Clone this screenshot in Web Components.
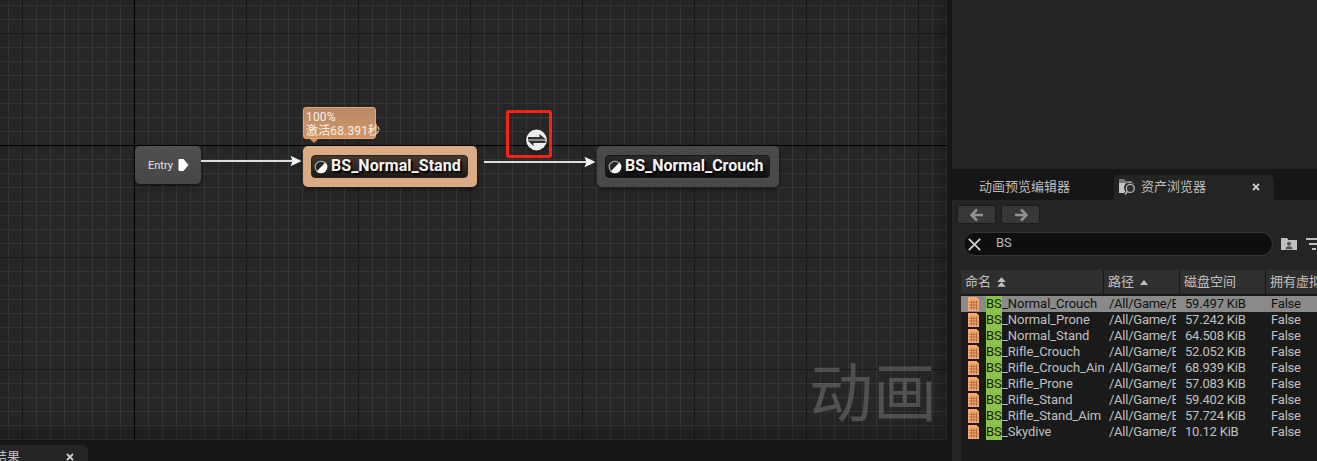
<!DOCTYPE html>
<html lang="zh">
<head>
<meta charset="utf-8">
<title>Animation graph</title>
<style>
html,body{margin:0;height:100%;overflow:hidden;background:#161616}
body{font-family:Roboto,"Noto Sans CJK SC",sans-serif;font-size:13px;color:#c0c0c0}
</style>
</head>
<body>
<anim-editor></anim-editor>
<script>
function define(name, html, setup) {
  customElements.define(name, class extends HTMLElement {
    connectedCallback() {
      if (this.shadowRoot) return;
      const root = this.attachShadow({mode: 'open'});
      const t = document.createElement('template');
      t.innerHTML = html;
      root.append(t.content.cloneNode(true));
      if (setup) setup(this, root);
    }
  });
}

define('state-node', `
<style>
:host{display:flex;box-sizing:border-box;padding:9px 9px 9px 8px;border-radius:5px;background:rgba(82,82,82,.82);box-shadow:0 2px 5px rgba(0,0,0,.5)}
:host([active]){background:#d9ac86}
.in{flex:1;display:flex;align-items:center;gap:3px;padding-left:2px;border-radius:4px;border:1px solid #181818;box-sizing:border-box;
background:linear-gradient(#2a2a2a,#101010);color:#f4f4f4;font-weight:700;font-size:16px;white-space:nowrap;text-shadow:2px 2px 1px #000}
:host([active]) .in{background:linear-gradient(#42382e,#1e1a16);border-color:#2c241c}
:host([active]) span{letter-spacing:.06px}
svg{flex:none}
span{display:block;line-height:20px;margin-top:-2px}
</style>
<div class="in"><svg width="14" height="14" viewBox="0 0 14 14"><circle cx="7" cy="7" r="5.8" fill="#252525" stroke="#b5b5b5" stroke-width="1.1"/><path d="M11.4 2.6A6.2 6.2 0 0 1 2.6 11.4Z" fill="#fff"/></svg><span><slot></slot></span></div>`);

define('entry-node', `
<style>
:host{display:flex;box-sizing:border-box;align-items:center;padding:0 12px 0 13px;justify-content:space-between;border-radius:5px;background:linear-gradient(#505050,#464646);box-shadow:0 2px 5px rgba(0,0,0,.55);color:#e4e4e4;font-size:11px}
</style>
<slot></slot><svg width="11" height="12" viewBox="0 0 11 12"><path d="M1.5 0H5.5L10.5 6 5.5 12H1.5Q.5 12 .5 11V1Q.5 0 1.5 0Z" fill="#fff"/></svg>`);

define('state-bubble', `
<style>
:host{display:block;box-sizing:border-box;border:1px solid #eda474;border-radius:3px;background:linear-gradient(#b98a68,#d29667);color:#f7efe9;font-size:12px;line-height:14px;padding:2px 0 0 2px;white-space:nowrap}
i{position:absolute;left:6px;top:31px;border:4px solid transparent;border-top-color:#d09060;border-bottom:0}
div{letter-spacing:.15px}
</style><div><slot name="pct"></slot></div><div><slot></slot></div><i></i>`);

define('graph-link', `
<style>:host{display:block;height:12px}svg{display:block;width:100%;height:12px;overflow:visible}</style>
<svg><line x1="0" y1="6" y2="6" stroke="#dedede" stroke-width="1.9"/><path fill="#f2f2f2"/></svg>`,
(h, r) => {
  const w = +h.getAttribute('length');
  r.querySelector('line').setAttribute('x2', w - 5);
  r.querySelector('path').setAttribute('d', `M${w-10.5} .7 L${w+.7} 6 L${w-10.5} 11.3 L${w-8.5} 6Z`);
});

define('transition-rule', `
<style>:host{display:block}svg{display:block;filter:drop-shadow(0 2px 2px rgba(0,0,0,.5))}</style>
<svg width="23" height="22" viewBox="0 0 23 22"><circle cx="11.5" cy="11" r="10.4" fill="#eee"/><path d="M3 11H20.5" stroke="#888" stroke-width="1.4"/><path d="M3 10.3V8H14.5V5L20.7 10.3Z" fill="#303030"/><path d="M20.5 11.7V14H8.5V17L2.9 11.7Z" fill="#303030"/></svg>`);

define('graph-canvas', `
<style>
:host{display:block;position:relative;overflow:hidden;background:#262626}
.grid,.shade{position:absolute;inset:0;display:block}
.shade{box-shadow:inset -6px -8px 22px rgba(0,0,0,.28)}
.mark{position:absolute;left:809px;top:345px;font:400 64px/86px "Noto Sans CJK SC",sans-serif;color:rgba(150,150,150,.38);white-space:nowrap}
.n{position:absolute}
.box{position:absolute;left:506px;top:110px;width:40px;height:42px;border:3px solid #fa2115;border-radius:3px}
</style>
<svg class="grid" width="947" height="440"></svg><div class="shade"></div>
<div class="mark">动画</div>
<entry-node class="n" style="left:135px;top:146px;width:66px;height:38px">Entry</entry-node>
<graph-link class="n" length="100" style="left:201px;top:155px;width:100px"></graph-link>
<state-bubble class="n" style="left:303px;top:107px;width:73px;height:32px"><span slot="pct">100%</span>激活68.391秒</state-bubble>
<state-node active class="n" style="left:303px;top:146px;width:174px;height:41px">BS_Normal_Stand</state-node>
<graph-link class="n" length="111" style="left:484px;top:156px;width:111px"></graph-link>
<div class="box"></div>
<transition-rule class="n" style="left:525px;top:129px"></transition-rule>
<state-node class="n" style="left:597px;top:146px;width:182px;height:41px">BS_Normal_Crouch</state-node>`,
(h, r) => {
  let minor = '', major = '';
  for (let x = 8; x < 947; x += 14) (x - 134) % 112 ? minor += `M${x} 0h1v440h-1z` : major += `M${x} 0h1v440h-1z`;
  for (let y = 5; y < 440; y += 14) (y - 145) % 112 ? minor += `M0 ${y}h947v1H0z` : major += `M0 ${y}h947v1H0z`;
  r.querySelector('.grid').innerHTML = `<path d="${minor}" fill="#353535"/><path d="${major}" fill="#181818"/><path d="M134 0h1v440h-1zM0 145h947v1H0z" fill="#000"/>`;
});

define('dock-tab', `
<style>
:host{display:flex;box-sizing:border-box;align-items:center;height:25px;font-size:13px;line-height:20px;white-space:nowrap;color:#bdbdbd}
:host([active]){background:#242424;border-radius:5px 5px 0 0}
.x{margin-left:auto}
:host(:not([closable])) .x{display:none}
</style><slot name="icon"></slot><slot></slot><svg class="x" width="8" height="8" viewBox="0 0 8 8"><path d="M1 1L7 7M7 1L1 7" stroke="#ccc" stroke-width="1.8"/></svg>`);

define('nav-button', `
<style>:host{display:flex;align-items:center;justify-content:center;box-sizing:border-box;width:39px;height:19px;border-radius:3px;background:#373737;border:1px solid #1b1b1b}
:host([forward]) svg{transform:scaleX(-1)}</style>
<svg width="14" height="14" viewBox="0 0 14 14"><path d="M13 7H2.5M7 1.3L1.6 7 7 12.7" fill="none" stroke="#929292" stroke-width="2.6"/></svg>`);

define('search-box', `
<style>:host{display:flex;flex:none;align-items:center;box-sizing:border-box;width:310px;height:24px;border:1px solid #353535;border-radius:12px;background:#0e0e0e;padding-left:4px;gap:15px;color:#bbb}
span{margin-top:-3px}</style>
<svg width="13" height="13" viewBox="0 0 13 13"><path d="M.8 .8L12.2 12.2M12.2 .8L.8 12.2" stroke="#d0d0d0" stroke-width="1.8"/></svg><span><slot></slot></span>`);

define('asset-row', `
<style>
:host{display:grid;grid-template-columns:143px 76px 86px 80px;height:16px;line-height:16px;white-space:nowrap;color:#c0c0c0;letter-spacing:-.2px}
:host([selected]){background:#8a8a8a;color:#111}
div{overflow:hidden;padding-left:5px;margin-right:5px}
.name{display:flex;padding-left:7px;margin-right:0;letter-spacing:-.05px}
.name svg{flex:none;margin-top:1px;margin-right:7px}
b{font-weight:400;background:#8bc34a;color:#151d08;width:16px;flex:none;letter-spacing:-.1px}
.t{overflow:hidden}
.path{letter-spacing:-.25px;margin-right:4px}
</style>
<div class="name"><svg width="11" height="14" viewBox="0 0 11 14"><path d="M0 0H8.5L11 2.5V14H0Z" fill="#fba873"/><path d="M3.5 3.5V13M6 3.5V13M8.5 3.5V13M1 5.2H10.2M1 8H10.2M1 10.8H10.2" stroke="#a5683f" stroke-width=".8"/></svg><b>BS</b><span class="t"></span></div>
<div class="path">/All/Game/B</div><div class="size"></div><div>False</div>`,
(h, r) => {
  r.querySelector('.t').textContent = h.getAttribute('name');
  r.querySelector('.size').textContent = h.getAttribute('size');
});

define('asset-table', `
<style>
:host{display:flex;flex-direction:column;background:#1a1a1a;overflow:hidden}
.head{display:grid;grid-template-columns:143px 76px 86px 80px;height:24px;line-height:24px;background:#2f2f2f;margin-bottom:2px;white-space:nowrap;color:#c0c0c0}
.head div{box-sizing:border-box;border-right:1px solid #191919;padding-left:4px;display:flex;align-items:center;gap:6px}
</style>
<div class="head"><div>命名<svg width="9" height="10" viewBox="0 0 9 10"><path d="M.2 5L4.5 .3 8.8 5ZM.2 9.8L4.5 5.1 8.8 9.8Z" fill="#c0c0c0"/></svg></div><div>路径<svg width="8" height="5" viewBox="0 0 8 5"><path d="M0 5L4 0 8 5Z" fill="#c0c0c0"/></svg></div><div>磁盘空间</div><div>拥有虚拟</div></div>
<slot></slot>`);

define('asset-browser', `
<style>
:host{display:flex;flex-direction:column;background:#242424;overflow:hidden}
.view{height:169px;flex:none}
.tabs{display:flex;align-items:flex-end;height:31px;flex:none;background:#161616}
.t1{width:162px;padding-left:27px;padding-bottom:1px}
.t2{width:160px;padding:0 14px 1px 5px}
.nav{display:flex;gap:5px;padding:5px 0 0 5px}
.search{display:flex;align-items:center;padding:8px 0 0 11px}
.search svg{flex:none}
asset-table{margin:14px 0 0 9px;flex:1}
</style>
<div class="view"></div>
<div class="tabs"><dock-tab class="t1">动画预览编辑器</dock-tab><dock-tab class="t2" active closable><svg slot="icon" width="17" height="16" viewBox="0 0 17 16" style="margin-right:5px"><path d="M0 0H5L6.5 2H13V4H0Z" fill="#777"/><path d="M0 4H14.5V5A5.4 5.4 0 0 0 6.5 12.5L5 14H0Z" fill="#c4c4c4"/><circle cx="11.3" cy="9.4" r="4" fill="#303030" stroke="#b8b8b8" stroke-width="1.3"/><path d="M8.5 12.3L6 15.4" stroke="#b8b8b8" stroke-width="1.6"/></svg>资产浏览器</dock-tab></div>
<div class="nav"><nav-button></nav-button><nav-button forward></nav-button></div>
<div class="search"><search-box>BS</search-box>
<svg width="16" height="13" viewBox="0 0 16 13" style="margin-left:8px"><path d="M0 0H6L7.5 2H16V12H0Z" fill="#c0c0c0"/><circle cx="8" cy="5.8" r="2" fill="#555"/><path d="M4.5 11.2Q4.5 8.3 8 8.3T11.5 11.2Z" fill="#555"/></svg>
<svg width="16" height="12" viewBox="0 0 16 12" style="margin-left:9px"><path d="M0 1H16M3 6H13M6 11H10" stroke="#c0c0c0" stroke-width="1.8"/></svg></div>
<asset-table>
<asset-row selected name="_Normal_Crouch" size="59.497 KiB"></asset-row>
<asset-row name="_Normal_Prone" size="57.242 KiB"></asset-row>
<asset-row name="_Normal_Stand" size="64.508 KiB"></asset-row>
<asset-row name="_Rifle_Crouch" size="52.052 KiB"></asset-row>
<asset-row name="_Rifle_Crouch_Aim" size="68.939 KiB"></asset-row>
<asset-row name="_Rifle_Prone" size="57.083 KiB"></asset-row>
<asset-row name="_Rifle_Stand" size="59.402 KiB"></asset-row>
<asset-row name="_Rifle_Stand_Aim" size="57.724 KiB"></asset-row>
<asset-row name="_Skydive" size="10.12 KiB"></asset-row>
</asset-table>`);

define('anim-editor', `
<style>
:host{display:grid;grid-template-columns:947px 365px;column-gap:5px;height:461px;background:#161616;overflow:hidden}
.left{display:grid;grid-template-rows:440px 16px;row-gap:5px;overflow:hidden}
.out{width:88px;border-radius:0 5px 0 0;padding:0 14px 2px 0}
.out span{margin-left:-6px}
</style>
<div class="left"><graph-canvas></graph-canvas><dock-tab class="out" active closable><span>结果</span></dock-tab></div>
<asset-browser></asset-browser>`);
</script>
</body>
</html>
